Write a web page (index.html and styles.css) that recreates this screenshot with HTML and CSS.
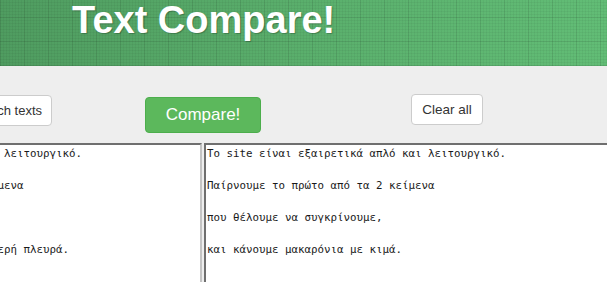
FILE: index.html
```html
<!DOCTYPE html>
<html lang="el">
<head>
<meta charset="utf-8">
<title>Text Compare!</title>
<link rel="stylesheet" href="styles.css">
</head>
<body>
<header class="header">
  <h1 class="title">Text Compare!</h1>
</header>
<main class="main">
  <div class="actions">
    <button class="btn btn-switch">Switch texts</button>
    <button class="btn btn-compare">Compare!</button>
    <button class="btn btn-clear">Clear all</button>
  </div>
  <div class="editors">
    <textarea class="editor editor-left" spellcheck="false">Το site είναι εξαιρετικά απλό και λειτουργικό.

Παίρνουμε το δεύτερο από τα 2 κείμενα

που θέλουμε να συγκρίνουμε,

και το άλλο το βάζουμε στην αριστερή πλευρά.</textarea>
    <textarea class="editor editor-right" spellcheck="false">Το site είναι εξαιρετικά απλό και λειτουργικό.

Παίρνουμε το πρώτο από τα 2 κείμενα

που θέλουμε να συγκρίνουμε,

και κάνουμε μακαρόνια με κιμά.</textarea>
  </div>
</main>
</body>
</html>
```

FILE: styles.css
```css
html, body {
  margin: 0;
  padding: 0;
}
body {
  width: 607px;
  height: 282px;
  overflow: hidden;
  background: #eeeeee;
  font-family: "Liberation Sans", Arial, sans-serif;
}
.header {
  height: 66px;
  background-color: #58a96a;
  background-image:
    repeating-linear-gradient(90deg, rgba(0,0,0,0.07) 0 1px, transparent 1px 24px),
    repeating-linear-gradient(0deg, rgba(0,0,0,0.07) 0 1px, transparent 1px 24px),
    repeating-linear-gradient(90deg, rgba(0,0,0,0.04) 0 1px, transparent 1px 3px),
    repeating-linear-gradient(0deg, rgba(0,0,0,0.04) 0 1px, transparent 1px 3px),
    linear-gradient(90deg, #4f9c60 0%, #5aaf6c 50%, #62bd76 100%);
  overflow: hidden;
}
.title {
  margin: 0;
  padding-left: 72px;
  font-family: "Liberation Sans", Arial, sans-serif;
  font-weight: bold;
  font-size: 38px;
  line-height: 40px;
  color: #ffffff;
  text-shadow: 1px 1px 1px rgba(0,0,0,0.25);
}
.actions {
  display: flex;
  align-items: flex-start;
  margin-left: -44px;
  padding-top: 28px;
  height: 49px;
}
.btn {
  box-sizing: border-box;
  flex-shrink: 0;
  font-family: "Liberation Sans", Arial, sans-serif;
  border-radius: 4px;
  cursor: pointer;
  margin: 0;
}
.btn-switch, .btn-clear {
  background: #ffffff;
  border: 1px solid #cccccc;
  color: #333333;
  font-size: 13.5px;
  height: 31px;
  padding: 0 8px;
}
.btn-switch {
  width: 96px;
  margin-top: 1px;
  font-size: 13px;
  text-align: right;
  padding: 0 9px 0 0;
  white-space: nowrap;
}
.btn-compare {
  width: 116px;
  height: 36px;
  margin-top: 3px;
  margin-left: 93px;
  background: #5cb85c;
  border: 1px solid #4cae4c;
  color: #ffffff;
  font-size: 17px;
  padding: 0;
}
.btn-clear {
  width: 72px;
  margin-left: 150px;
}
.editors {
  display: flex;
  gap: 2px;
  margin-left: -220px;
}
.editor {
  box-sizing: border-box;
  flex-shrink: 0;
  width: 422px;
  height: 200px;
  margin: 0;
  padding: 1px 1px;
  border-width: 2px;
  border-style: solid;
  border-color: #6f6f6f #c4c4c4 #c4c4c4 #6f6f6f;
  background: #ffffff;
  color: #1a1a1a;
  font-family: "DejaVu Sans Mono", monospace;
  font-size: 10.8px;
  line-height: 16px;
  resize: none;
  outline: none;
  overflow: hidden;
  white-space: pre-wrap;
}
```
